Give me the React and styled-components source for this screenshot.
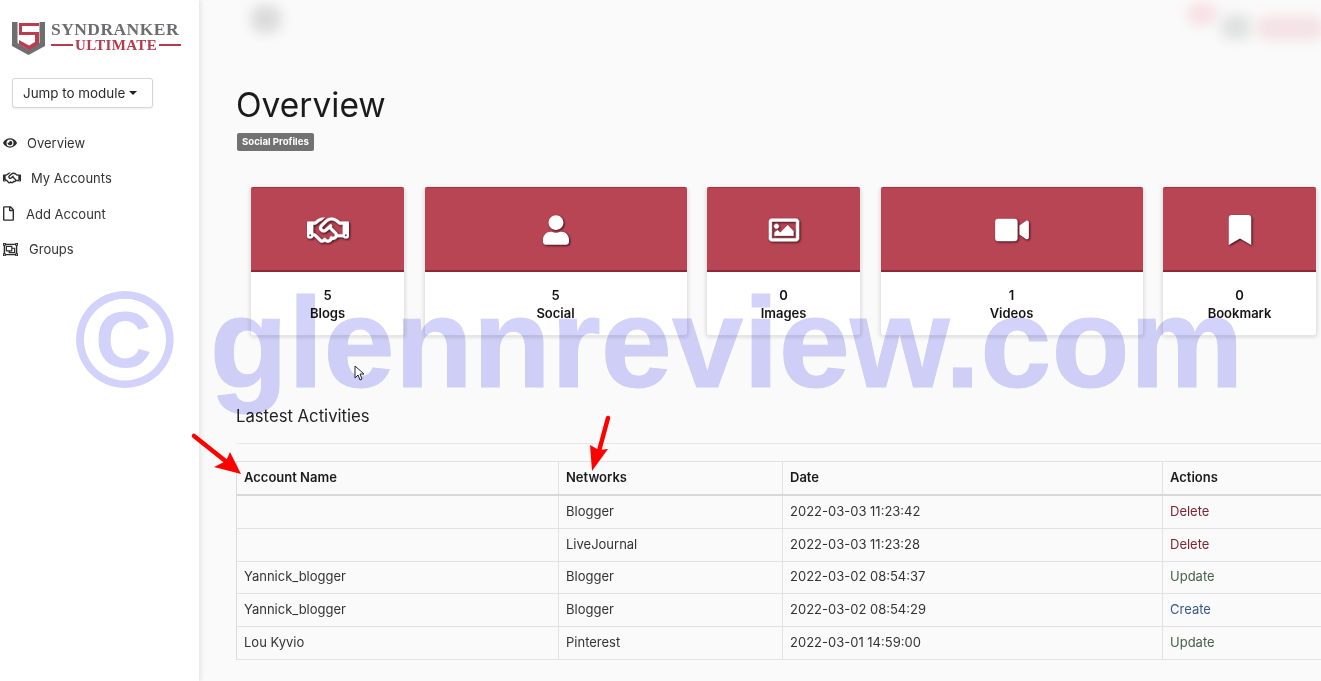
import React from "react";
import styled, { createGlobalStyle } from "styled-components";
import {
  FaEye,
  FaRegFile,
  FaRegObjectGroup,
  FaUser,
  FaRegImage,
  FaVideo,
  FaBookmark,
} from "react-icons/fa";
import { FaRegHandshake } from "react-icons/fa6";

const GlobalStyle = createGlobalStyle`
  html, body {
    margin: 0;
    height: 100%;
    overflow: hidden;
    background: #fafafa;
    font-family: "Inter", "Liberation Sans", sans-serif;
    color: #222;
  }
`;

const Page = styled.div`
  position: relative;
  display: flex;
  width: 1321px;
  height: 681px;
  overflow: hidden;
`;
const Sidebar = styled.aside`
  width: 199px;
  flex: none;
  background: #fff;
  box-shadow: 2px 0 5px rgba(0, 0, 0, 0.09);
  padding: 22px 0 0 0;
  box-sizing: border-box;
`;
const Logo = styled.div`
  display: flex;
  align-items: flex-start;
  gap: 6px;
  padding-left: 12px;
  height: 34px;
`;
const LogoWords = styled.div`
  display: flex;
  flex-direction: column;
  width: 130px;
  margin-top: -1px;
  font-family: "Liberation Serif", serif;
  font-weight: 700;
  line-height: 1;
`;
const LogoTop = styled.span`
  font-size: 17.5px;
  color: #6d6d6f;
  letter-spacing: 0.45px;
  line-height: 17px;
  white-space: nowrap;
`;
const LogoBottom = styled.span`
  display: flex;
  align-items: center;
  gap: 2px;
  font-size: 15px;
  line-height: 14px;
  color: #b73a4c;
  letter-spacing: 0.35px;
  &::before,
  &::after {
    content: "";
    flex: 1;
    height: 1.5px;
    background: #b73a4c;
  }
`;
const JumpButton = styled.button`
  display: flex;
  align-items: center;
  gap: 4px;
  margin: 22px 0 0 12px;
  width: 141px;
  height: 30px;
  padding: 0 10px;
  box-sizing: border-box;
  background: #fff;
  border: 1px solid #d6d6d6;
  border-radius: 3px;
  box-shadow: 0 1px 2px rgba(0, 0, 0, 0.08);
  font: 13.4px "Inter", sans-serif;
  color: #2a2a2a;
  white-space: nowrap;
`;
const Caret = styled.span`
  width: 0;
  height: 0;
  border-left: 4px solid transparent;
  border-right: 4px solid transparent;
  border-top: 4px solid #222;
`;
const Nav = styled.nav`
  display: flex;
  flex-direction: column;
  margin-top: 17px;
`;
const NavItem = styled.a`
  display: flex;
  align-items: center;
  height: 35.5px;
  padding-left: 3px;
  font-size: 13px;
  color: #333;
  svg {
    flex: none;
    width: ${(p) => p.$icon}px;
    height: ${(p) => p.$tall}px;
    margin-right: ${(p) => p.$gap}px;
    color: #2c2c2c;
  }
`;
const Main = styled.main`
  flex: 1;
  min-width: 0;
  padding: 0 0 0 37px;
`;
const TopBar = styled.div`
  position: relative;
  height: 87px;
`;
const Smudge = styled.span`
  position: absolute;
  top: ${(p) => p.$top}px;
  left: ${(p) => p.$left}px;
  width: ${(p) => p.$w}px;
  height: ${(p) => p.$h}px;
  background: ${(p) => p.$color};
  border-radius: 10px;
  filter: blur(6px);
`;
const Title = styled.h1`
  margin: 0;
  font-size: 33.5px;
  line-height: 37px;
  font-weight: 400;
  color: #1b1b1b;
`;
const Badge = styled.span`
  display: inline-block;
  margin: 9px 0 0 1px;
  padding: 0 5px;
  height: 18px;
  line-height: 18px;
  border-radius: 2px;
  background: #727272;
  color: #fff;
  font-size: 9.6px;
  font-weight: 700;
`;
const Cards = styled.div`
  display: grid;
  grid-template-columns: 155px 264px 155px 264px 155px;
  column-gap: 18.5px;
  margin: 36px 0 0 14px;
`;
const Card = styled.div`
  display: flex;
  flex-direction: column;
  height: 149px;
  box-sizing: border-box;
  background: #fff;
  border: 1px solid #e6e6e6;
  border-top: 0;
  border-radius: 3px;
  box-shadow: 0 1px 4px rgba(0, 0, 0, 0.14);
`;
const CardHead = styled.div`
  display: flex;
  align-items: center;
  justify-content: center;
  height: 85px;
  padding-top: 2px;
  background: #b84554;
  border-top: 1px solid #a92f40;
  border-bottom: 2px solid #8e2638;
  border-radius: 2px 2px 0 0;
  box-sizing: border-box;
  color: #fff;
  svg {
    width: ${(p) => p.$icon}px;
    height: ${(p) => p.$tall}px;
    stroke: #fff;
    stroke-width: ${(p) => p.$stroke};
    filter: drop-shadow(1.5px 1.5px 1px #3a0d15);
  }
`;
const CardBody = styled.div`
  display: flex;
  flex-direction: column;
  align-items: center;
  padding-top: 14px;
  font-size: 13px;
  font-weight: 600;
  line-height: 18px;
  color: #151515;
`;
const SectionTitle = styled.h2`
  margin: 70px 0 0;
  font-size: 16.7px;
  line-height: 20px;
  font-weight: 400;
  color: #222;
`;
const Rule = styled.hr`
  margin: 17px 0 17px;
  border: 0;
  border-top: 1px solid #e8e8e8;
`;
const Table = styled.table`
  border-collapse: collapse;
  table-layout: fixed;
  width: 1120px;
  font-size: 13px;
  color: #333;
  th,
  td {
    padding: 0 0 2px 7px;
    text-align: left;
    border: 1px solid #e2e2e2;
    border-left-color: #ededed;
    white-space: nowrap;
  }
  th:first-child,
  td:first-child {
    border-left-color: #dcdcdc;
  }
  th:last-child,
  td:last-child {
    border-left-color: #dedede;
  }
  th {
    height: 30px;
    font-weight: 600;
    color: #1b1b1b;
    border-bottom: 2px solid #d8d8d8;
  }
  td {
    height: 29.8px;
  }
`;
const ActionLink = styled.span`
  color: ${(p) => p.$color};
`;
const Watermark = styled.div`
  position: absolute;
  top: 264px;
  left: 74px;
  display: flex;
  align-items: baseline;
  font-family: "Liberation Sans", sans-serif;
  font-weight: 700;
  line-height: 150px;
  color: #d2d2fb;
  mix-blend-mode: multiply;
  pointer-events: none;
  white-space: nowrap;
`;
const WatermarkMark = styled.span`
  font-size: 138px;
  margin-right: 34px;
`;
const WatermarkName = styled.span`
  font-size: 128px;
  -webkit-text-stroke: 1px #d2d2fb;
`;
const Overlay = styled.svg`
  position: absolute;
  top: ${(p) => p.$top}px;
  left: ${(p) => p.$left}px;
  pointer-events: none;
`;

const navItems = [
  { label: "Overview", Icon: FaEye, icon: 14, tall: 14, gap: 10 },
  { label: "My Accounts", Icon: FaRegHandshake, icon: 18, tall: 16, gap: 10 },
  { label: "Add Account", Icon: FaRegFile, icon: 11, tall: 15, gap: 12 },
  { label: "Groups", Icon: FaRegObjectGroup, icon: 15, tall: 15, gap: 11 },
];

const cards = [
  { count: 5, label: "Blogs", Icon: FaRegHandshake, icon: 42, tall: 34, stroke: 4 },
  { count: 5, label: "Social", Icon: FaUser, icon: 26, tall: 30, stroke: 0 },
  { count: 0, label: "Images", Icon: FaRegImage, icon: 36, tall: 30, stroke: 10 },
  { count: 1, label: "Videos", Icon: FaVideo, icon: 34, tall: 30, stroke: 0 },
  { count: 0, label: "Bookmark", Icon: FaBookmark, icon: 24, tall: 30, stroke: 0 },
];

const rows = [
  ["", "Blogger", "2022-03-03 11:23:42", "Delete", "#7d2433"],
  ["", "LiveJournal", "2022-03-03 11:23:28", "Delete", "#7d2433"],
  ["Yannick_blogger", "Blogger", "2022-03-02 08:54:37", "Update", "#47604d"],
  ["Yannick_blogger", "Blogger", "2022-03-02 08:54:29", "Create", "#36598a"],
  ["Lou Kyvio", "Pinterest", "2022-03-01 14:59:00", "Update", "#47604d"],
];

export default function App() {
  return (
    <Page>
      <GlobalStyle />
      <Sidebar>
        <Logo>
          <svg width="33" height="33" viewBox="0 0 33 33">
            <path d="M0 0h5.5v21l11 6.5 11-6.5V0H33v24L16.5 33 0 24z" fill="#6f6f71" />
            <path d="M7 1h20v3H10v6h17v12l-10 6-10-6v-4l10 5.5 6-3.5V13H7z" fill="#bd3b4f" />
          </svg>
          <LogoWords>
            <LogoTop>SYNDRANKER</LogoTop>
            <LogoBottom>ULTIMATE</LogoBottom>
          </LogoWords>
        </Logo>
        <JumpButton>
          Jump to module <Caret />
        </JumpButton>
        <Nav>
          {navItems.map(({ label, Icon, icon, tall, gap }) => (
            <NavItem key={label} $icon={icon} $tall={tall} $gap={gap}>
              <Icon />
              {label}
            </NavItem>
          ))}
        </Nav>
      </Sidebar>
      <Main>
        <TopBar>
          <Smudge $left={15} $top={5} $w={30} $h={28} $color="#dcdcdc" />
          <Smudge $left={951} $top={3} $w={30} $h={22} $color="#f7e0e4" />
          <Smudge $left={985} $top={14} $w={30} $h={26} $color="#e0e2e1" />
          <Smudge $left={1020} $top={16} $w={68} $h={24} $color="#f4e2e5" />
        </TopBar>
        <Title>Overview</Title>
        <Badge>Social Profiles</Badge>
        <Cards>
          {cards.map(({ count, label, Icon, icon, tall, stroke }) => (
            <Card key={label}>
              <CardHead $icon={icon} $tall={tall} $stroke={stroke}>
                <Icon />
              </CardHead>
              <CardBody>
                <span>{count}</span>
                <span>{label}</span>
              </CardBody>
            </Card>
          ))}
        </Cards>
        <SectionTitle>Lastest Activities</SectionTitle>
        <Rule />
        <Table>
          <colgroup>
            <col style={{ width: 322 }} />
            <col style={{ width: 224 }} />
            <col style={{ width: 380 }} />
            <col />
          </colgroup>
          <thead>
            <tr>
              <th>Account Name</th>
              <th>Networks</th>
              <th>Date</th>
              <th>Actions</th>
            </tr>
          </thead>
          <tbody>
            {rows.map(([name, network, date, action, color]) => (
              <tr key={date}>
                <td>{name}</td>
                <td>{network}</td>
                <td>{date}</td>
                <td>
                  <ActionLink $color={color}>{action}</ActionLink>
                </td>
              </tr>
            ))}
          </tbody>
        </Table>
      </Main>
      <Watermark>
        <WatermarkMark>©</WatermarkMark>
        <WatermarkName>glennreview.com</WatermarkName>
      </Watermark>
      <Overlay $left={190} $top={432} width="54" height="44" viewBox="0 0 54 44">
        <path d="M4 4l34 27" stroke="#f00" strokeWidth="4.5" strokeLinecap="round" />
        <path d="M51 42L24 35l12-6 4-9z" fill="#f00" />
      </Overlay>
      <Overlay $left={588} $top={415} width="24" height="58" viewBox="0 0 24 58">
        <path d="M20 3l-9 33" stroke="#f00" strokeWidth="4.5" strokeLinecap="round" />
        <path d="M4 56L2 30l9 5 9-1z" fill="#f00" />
      </Overlay>
      <Overlay $left={354} $top={365} width="11" height="16" viewBox="0 0 11 16">
        <path d="M1 1v12l3-3 2 5 2-1-2-5h4z" fill="#fff" stroke="#223" strokeWidth="1" />
      </Overlay>
    </Page>
  );
}
